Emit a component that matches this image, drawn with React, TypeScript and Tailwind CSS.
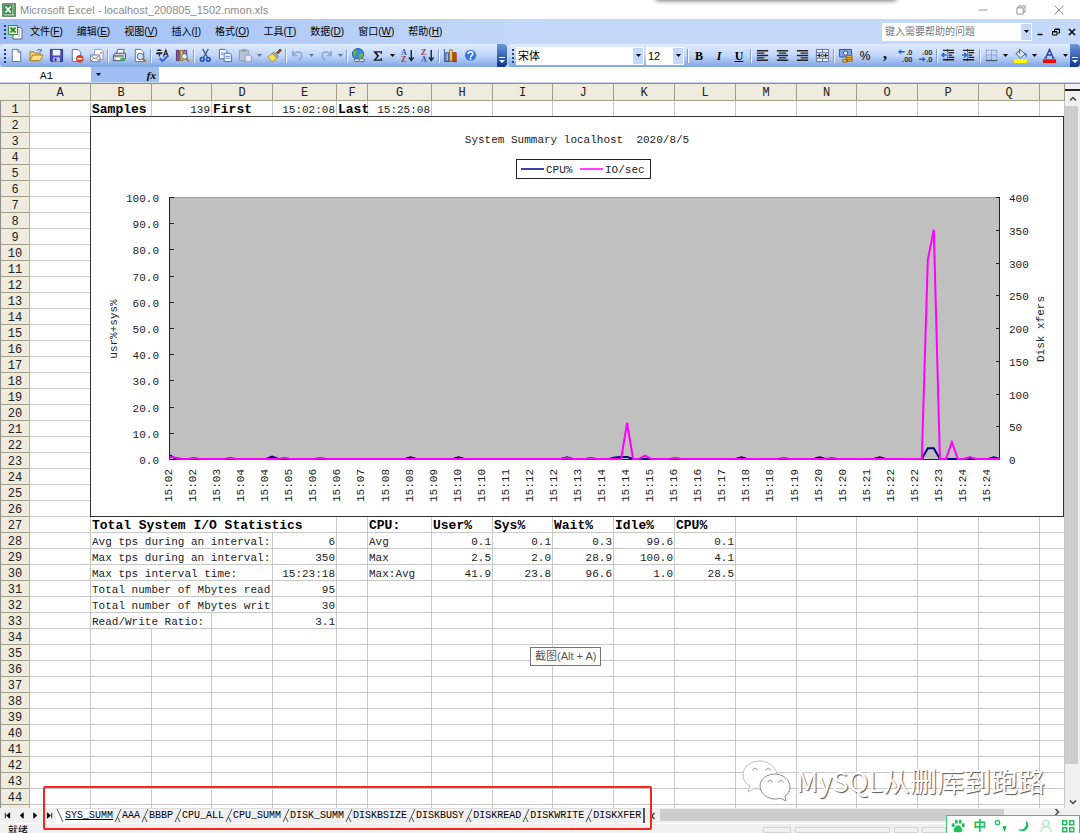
import type { ReactNode } from 'react';

interface Cell {
  col: number;
  text: string;
  span?: number;
  bold?: boolean;
  right?: boolean;
}

const COLUMNS = 'ABCDEFGHIJKLMNOPQ'.split('');
const COLUMN_WIDTHS = [30, 61, 61, 60, 61, 64, 31, 64, 61, 60, 61, 61, 61, 61, 60, 61, 61, 61];
const ROW_COUNT = 44;

const CELLS: Record<number, Cell[]> = {
  1: [
    { col: 1, text: 'Samples', bold: true },
    { col: 2, text: '139', right: true },
    { col: 3, text: 'First', bold: true },
    { col: 4, text: '15:02:08', right: true },
    { col: 5, text: 'Last', bold: true },
    { col: 6, text: '15:25:08', right: true },
  ],
  27: [
    { col: 1, text: 'Total System I/O Statistics', bold: true, span: 4 },
    { col: 6, text: 'CPU:', bold: true },
    { col: 7, text: 'User%', bold: true },
    { col: 8, text: 'Sys%', bold: true },
    { col: 9, text: 'Wait%', bold: true },
    { col: 10, text: 'Idle%', bold: true },
    { col: 11, text: 'CPU%', bold: true },
  ],
  28: [
    { col: 1, text: 'Avg tps during an interval:', span: 3 },
    { col: 4, text: '6', right: true },
    { col: 6, text: 'Avg' },
    { col: 7, text: '0.1', right: true },
    { col: 8, text: '0.1', right: true },
    { col: 9, text: '0.3', right: true },
    { col: 10, text: '99.6', right: true },
    { col: 11, text: '0.1', right: true },
  ],
  29: [
    { col: 1, text: 'Max tps during an interval:', span: 3 },
    { col: 4, text: '350', right: true },
    { col: 6, text: 'Max' },
    { col: 7, text: '2.5', right: true },
    { col: 8, text: '2.0', right: true },
    { col: 9, text: '28.9', right: true },
    { col: 10, text: '100.0', right: true },
    { col: 11, text: '4.1', right: true },
  ],
  30: [
    { col: 1, text: 'Max tps interval time:', span: 3 },
    { col: 4, text: '15:23:18', right: true },
    { col: 6, text: 'Max:Avg' },
    { col: 7, text: '41.9', right: true },
    { col: 8, text: '23.8', right: true },
    { col: 9, text: '96.6', right: true },
    { col: 10, text: '1.0', right: true },
    { col: 11, text: '28.5', right: true },
  ],
  31: [
    { col: 1, text: 'Total number of Mbytes read', span: 3 },
    { col: 4, text: '95', right: true },
  ],
  32: [
    { col: 1, text: 'Total number of Mbytes writ', span: 3 },
    { col: 4, text: '30', right: true },
  ],
  33: [
    { col: 1, text: 'Read/Write Ratio:', span: 2 },
    { col: 4, text: '3.1', right: true },
  ],
};

const MENUS = [
  ['文件', 'F'],
  ['编辑', 'E'],
  ['视图', 'V'],
  ['插入', 'I'],
  ['格式', 'O'],
  ['工具', 'T'],
  ['数据', 'D'],
  ['窗口', 'W'],
  ['帮助', 'H'],
];

const SHEETS = [
  'SYS_SUMM', 'AAA', 'BBBP', 'CPU_ALL', 'CPU_SUMM', 'DISK_SUMM',
  'DISKBSIZE', 'DISKBUSY', 'DISKREAD', 'DISKWRITE', 'DISKXFER',
];

function Svg({ children, size = 15 }: { children: ReactNode; size?: number }) {
  return (
    <svg width={size} height={size} viewBox="0 0 16 16" fill="none" aria-hidden="true">
      {children}
    </svg>
  );
}

const page = <path d="M3.5 1.5h6l3 3v10h-9z" fill="#fff" stroke="#5b6f9e" />;

const ICONS: Record<string, ReactNode> = {
  new: <Svg>{page}<path d="M9.5 1.5v3h3" stroke="#5b6f9e" /></Svg>,
  open: (
    <Svg>
      <path d="M1 13V4h4l1 1.5h6V8" fill="#f6d06a" stroke="#a8741b" />
      <path d="M1 13.5 4 7.5h11l-3 6z" fill="#ffe28a" stroke="#a8741b" />
      <path d="M8 3c2-2 4-2 5 0m0-2v2.500h-2" stroke="#3a5fa8" />
    </Svg>
  ),
  save: (
    <Svg>
      <path d="M1.500 1.500h13v13h-12l-1-1z" fill="#4a4fb5" stroke="#2d2f86" />
      <path d="M4 2h8v6H4z" fill="#eef2ff" />
      <path d="M4.500 10h7v4.500h-7z" fill="#c4c8e8" />
      <path d="M6 11h2v3H6z" fill="#2d2f86" />
    </Svg>
  ),
  permission: (
    <Svg>
      {page}
      <circle cx="11.500" cy="11.500" r="4" fill="#e2391d" />
      <path d="M9 11.500h5" stroke="#fff" strokeWidth="1.700" />
    </Svg>
  ),
  mail: (
    <Svg>
      <path d="M6 1.500h7l2 2V12H6z" fill="#fff" stroke="#8b93ab" />
      <path d="M1.500 7.500h10v7h-10z" fill="#f4f4f4" stroke="#777f98" />
      <path d="m2 8 4.500 3.500L11 8M2 14l3-3m6 3-3-3" stroke="#777f98" />
      <path d="M12 4h2v2h-2z" fill="#d97a50" />
    </Svg>
  ),
  print: (
    <Svg>
      <path d="m5 6 1-4.500h7L12 6" fill="#fff" stroke="#5d6475" />
      <path d="M1.500 7.500 4 5.500h10.500V11L12 13.500H1.500z" fill="#c9cdd6" stroke="#4c5160" />
      <path d="M2 8.500h10.500" stroke="#4c5160" />
      <path d="M4 11.500h6" stroke="#fff" strokeWidth="2" />
      <path d="M9 12h5" stroke="#39b04b" strokeWidth="3" />
    </Svg>
  ),
  preview: (
    <Svg>
      {page}
      <circle cx="9" cy="9" r="3.500" fill="#c9e4f8" stroke="#4f5b72" />
      <path d="m11.500 11.500 3 3" stroke="#b9741d" strokeWidth="2.400" />
    </Svg>
  ),
  spelling: (
    <Svg>
      <path d="M2 2.500h5M4.500 1v1.500M2 5h5L4.500 7v2M1 6h6.500M9 9l2.500-7L14 9M10 6.500h3" stroke="#222" strokeWidth="1.200" />
      <path d="m5 11 3 3 6-6" stroke="#2e66cf" strokeWidth="2.200" />
    </Svg>
  ),
  research: (
    <Svg>
      <path d="M1.500 2.500h3v11h-3z" fill="#8650a8" stroke="#583277" />
      <path d="M5.500 2.500h3v11h-3z" fill="#f2c94c" stroke="#8a6b16" />
      <path d="M9.500 2.500h3v9h-3z" fill="#b08bd0" stroke="#583277" />
      <circle cx="10" cy="9" r="3" fill="#dff0ff" stroke="#475" />
      <path d="m12 11 3 3.500" stroke="#c07a20" strokeWidth="2" />
    </Svg>
  ),
  cut: (
    <Svg>
      <path d="m5 1 5 9M11 1l-5 9" stroke="#45608f" strokeWidth="1.500" />
      <circle cx="4.500" cy="12" r="2" stroke="#1d4fb0" strokeWidth="1.600" />
      <circle cx="11" cy="12" r="2" stroke="#1d4fb0" strokeWidth="1.600" />
    </Svg>
  ),
  copy: (
    <Svg>
      <path d="M1.500 1.500h6l2 2v8h-8z" fill="#fff" stroke="#4567b0" />
      <path d="M6.500 5.500h6l2 2v7h-8z" fill="#eaf1ff" stroke="#4567b0" />
      <path d="M8 9h5M8 11h5M3 5h3M3 7h3" stroke="#6f8fd0" />
    </Svg>
  ),
  paste: (
    <Svg>
      <path d="M1.500 2.500h10v11h-10z" fill="#b9c3d6" stroke="#8f9ab3" />
      <path d="M4 1h5v3H4z" fill="#9aa5bb" />
      <path d="M7.500 7.500h5l2 2v5h-7z" fill="#e6ebf5" stroke="#8f9ab3" />
    </Svg>
  ),
  brush: (
    <Svg>
      <path d="m10 5 4-4 1.500 1.500-4 4z" fill="#8a5a22" stroke="#5f3d13" />
      <path d="M7 4.500 12 9l-1.500 1.500L5.500 6z" fill="#a9b4c8" stroke="#5f6a80" />
      <path d="m5.500 6 5 4.500L6 15 1 9.500z" fill="#ffe14f" stroke="#b0902a" />
    </Svg>
  ),
  undo: <Svg><path d="M3 3v5h5M3.500 8c2-5 9-5 9 0 0 2-1 4-3 5" stroke="#8fa6d6" strokeWidth="1.800" /></Svg>,
  redo: <Svg><path d="M13 3v5H8M12.500 8c-2-5-9-5-9 0 0 2 1 4 3 5" stroke="#8fa6d6" strokeWidth="1.800" /></Svg>,
  link: (
    <Svg>
      <circle cx="7.500" cy="6.500" r="6" fill="#3d87d8" stroke="#265a9c" />
      <path d="M3 3c3-2 4 1 3 3s-3 2-4 1zm5 5c2-3 4-3 5-2 0 3-2 5-4 6z" fill="#5fbb46" />
      <rect x="3.500" y="11.500" width="6" height="3" rx="1.500" fill="#dbe1ec" stroke="#566078" />
      <rect x="8.500" y="11.500" width="6" height="3" rx="1.500" fill="#dbe1ec" stroke="#566078" />
    </Svg>
  ),
  sum: <Svg size={12}><path d="M12.500 5V2.500h-9L8 8l-4.500 5.500h9V11M4.500 3l4 5" stroke="#1a1a1a" strokeWidth="1.900" /></Svg>,
  asc: <SortIcon top="A" bottom="Z" topColor="#2b51b5" bottomColor="#a33" />,
  desc: <SortIcon top="Z" bottom="A" topColor="#a33" bottomColor="#2b51b5" />,
  chart: (
    <Svg>
      <path d="M1.500 1v13.500H15" stroke="#47577c" />
      <path d="M3 5h3v9H3z" fill="#9db8ef" stroke="#2c4c97" />
      <path d="M7 2h3v12H7z" fill="#ffcb3d" stroke="#a2701b" />
      <path d="M11 5h3v9h-3z" fill="#d64a23" stroke="#8c2c12" />
    </Svg>
  ),
  help: (
    <Svg>
      <circle cx="8" cy="8" r="6.500" fill="#3a76e0" stroke="#c5dbff" />
      <path d="M5.500 6.500c0-3.500 5-3 5 0C10.500 8 8 8 8 10m0 1v2" stroke="#fff" strokeWidth="1.600" />
    </Svg>
  ),
  left: <AlignIcon d="M2 3h12M2 5.500h8M2 8h12M2 10.500h8M2 13h12" />,
  center: <AlignIcon d="M2 3h12M4 5.500h8M2 8h12M4 10.500h8M2 13h12" />,
  right: <AlignIcon d="M2 3h12M6 5.500h8M2 8h12M6 10.500h8M2 13h12" />,
  merge: (
    <Svg>
      <path d="M1.500 1.500h13v13h-13zM1.500 5h13M1.500 11h13M8 1.500V5m0 6v3.500" fill="#e7eefb" stroke="#5f6f90" />
      <path d="M2 8h3.500M14 8h-3.500M4 6 5.500 8 4 10m8-4-1.500 2 1.500 2" stroke="#222" strokeWidth="1.300" />
      <circle cx="8" cy="8" r="1.200" stroke="#222" />
    </Svg>
  ),
  currency: (
    <Svg>
      <path d="M1.500 1.500h13v8h-13z" fill="#7ea3e6" stroke="#2e4d99" />
      <circle cx="8" cy="5.500" r="2.300" fill="#dfeaff" stroke="#2e4d99" />
      <path d="M9 8h6v6H9zm-4 4h5v3H5z" fill="#f2b632" stroke="#94661a" />
      <path d="M9 10h6m-6 2h6" stroke="#94661a" />
    </Svg>
  ),
  incDecimal: <DecimalIcon top=".0" bottom=".00" up />,
  decDecimal: <DecimalIcon top=".00" bottom=".0" />,
  outdent: (
    <Svg>
      <path d="M2 2.500h12M8 5h6M8 7.500h4M8 10h6M2 12.500h12" stroke="#222" strokeWidth="1.400" />
      <path d="M7 1v14" stroke="#222" strokeDasharray="1 1" />
      <path d="M6 7.500H1M3.500 5 1 7.500 3.500 10" stroke="#2b5fd0" strokeWidth="1.500" />
    </Svg>
  ),
  indent: (
    <Svg>
      <path d="M2 2.500h12M8 5h6M8 7.500h4M8 10h6M2 12.500h12" stroke="#222" strokeWidth="1.400" />
      <path d="M7 1v14" stroke="#222" strokeDasharray="1 1" />
      <path d="M1 7.500h5M3.500 5 6 7.500 3.500 10" stroke="#2b5fd0" strokeWidth="1.500" />
    </Svg>
  ),
  borders: (
    <Svg>
      <path d="M2.500 2v11M8 2v11m5.500-11v11M2 2.500h12M2 7.500h12" stroke="#66779b" strokeDasharray="1 1" />
      <path d="M2 13.500h12" stroke="#333" />
    </Svg>
  ),
  fill: (
    <Svg>
      <path d="m3 6 5-4 5 4.500L8 10.500z" fill="#dbe9fb" stroke="#40567f" />
      <path d="M7 1v5" stroke="#40567f" />
      <path d="M12 5c3 0 3 3 2.500 5-1-1-2-3-2.500-5z" fill="#3d76d4" />
      <path d="M1 12h14v4H1z" fill="#ffff00" />
    </Svg>
  ),
  fontColor: (
    <Svg>
      <path d="m4 10.500 4-9 4 9M5.500 7.500h5M2.500 10.500h3m5 0h3" stroke="#2b4a94" strokeWidth="1.500" />
      <path d="M1 12h14v4H1z" fill="#ff0000" />
    </Svg>
  ),
};

function SortIcon({ top, bottom, topColor, bottomColor }: { top: string; bottom: string; topColor: string; bottomColor: string }) {
  return (
    <Svg>
      <text x="1" y="7.500" fontSize="8.500" fontWeight="bold" fontFamily="Liberation Serif" fill={topColor}>{top}</text>
      <text x="1" y="15" fontSize="8.500" fontWeight="bold" fontFamily="Liberation Serif" fill={bottomColor}>{bottom}</text>
      <path d="M12 2v11m-2.500-3 2.500 3.500 2.500-3.500" stroke="#222" strokeWidth="1.500" />
    </Svg>
  );
}

function AlignIcon({ d }: { d: string }) {
  return <Svg><path d={d} stroke="#222" strokeWidth="1.500" /></Svg>;
}

function DecimalIcon({ top, bottom, up = false }: { top: string; bottom: string; up?: boolean }) {
  return (
    <Svg>
      <text x="15.500" y="7" textAnchor="end" fontSize="8" fontWeight="bold" fontFamily="Liberation Sans" fill="#333">{top}</text>
      <text x="15.500" y="15" textAnchor="end" fontSize="8" fontWeight="bold" fontFamily="Liberation Sans" fill="#333">{bottom}</text>
      <path d={up ? 'M7 4H1m2-2L1 4l2 2' : 'M1 12h6m-2-2 2 2-2 2'} stroke="#2b5fd0" strokeWidth="1.400" />
    </Svg>
  );
}

function Tool({ name, label, children }: { name?: string; label: string; children?: ReactNode }) {
  return (
    <button aria-label={label} className="flex h-5 w-5 shrink-0 items-center justify-center text-black">
      {name ? ICONS[name] : children}
    </button>
  );
}

function Caret() {
  return (
    <svg width="5" height="3" viewBox="0 0 5 3" aria-hidden="true">
      <path d="M0 0h5L2.500 3z" fill="currentColor" />
    </svg>
  );
}

function CaretButton({ label, muted = false }: { label: string; muted?: boolean }) {
  return (
    <button
      aria-label={label}
      className={`flex h-5 w-[9px] shrink-0 items-center justify-center ${muted ? 'text-slate-500' : 'text-black'}`}
    >
      <Caret />
    </button>
  );
}

function Separator() {
  return (
    <span className="flex w-[3px] shrink-0 justify-center">
      <span className="h-[14px] w-[2px] border-r border-l border-r-[#f1f6ff] border-l-[#7d9cd4]" />
    </span>
  );
}

function Grip() {
  return <span className="ml-1 h-[14px] shrink-0 border-l-2 border-dotted border-[#27417d]" />;
}

function ToolbarEnd() {
  return (
    <button
      aria-label="工具栏选项"
      className="flex h-full w-[10px] shrink-0 items-end justify-center rounded-r bg-gradient-to-b from-[#7096dc] to-[#0b3692] pb-1 text-white"
    >
      <svg width="6" height="6" viewBox="0 0 6 6" aria-hidden="true">
        <path d="M0 0h6v1H0zM0 3h6L3 6z" fill="currentColor" />
      </svg>
    </button>
  );
}

function Combo({ label, value, className }: { label: string; value: string; className: string }) {
  return (
    <label className={`flex h-[18px] shrink-0 items-center bg-white ${className}`}>
      <select aria-label={label} className="min-w-0 flex-1 appearance-none px-[2px] text-[11px] leading-4 text-black outline-none">
        <option>{value}</option>
      </select>
      <span className="mr-px flex h-4 w-[10px] items-center justify-center bg-[#c3d8fa]">
        <Caret />
      </span>
    </label>
  );
}

function ExcelIcon() {
  return (
    <Svg size={14}>
      <path d="M1 1h14v14H1z" fill="#dcebd9" stroke="#35703b" strokeWidth="1.500" />
      <path d="M2 2h10v11H2z" fill="#2f8b45" />
      <path d="m4 4 6 7M10 4l-6 7" stroke="#fff" strokeWidth="2" />
      <path d="M13.500 3v10" stroke="#35703b" />
    </Svg>
  );
}

function WorkbookIcon() {
  return (
    <Svg size={16}>
      <path d="M6 3.500h7.500l1.500 1.500v10H6z" fill="#fff" stroke="#5a6580" />
      <path d="M12 5v8" stroke="#9aa5bf" />
      <path d="M1.500 1.500h9v9h-9z" fill="#e4f3df" stroke="#3f8a3f" />
      <path d="m3.500 3.500 5 5m0-5-5 5" stroke="#2f8b3a" strokeWidth="1.800" />
    </Svg>
  );
}

function TitleBar() {
  return (
    <header className="flex h-[19px] shrink-0 items-center bg-white px-[2px]">
      <ExcelIcon />
      <h1 className="ml-1 text-[11px] leading-4 text-[#8a8a8a]">
        Microsoft Excel - localhost_200805_1502.nmon.xls
      </h1>
      <div className="ml-auto flex items-center text-[#8c8c8c]">
        <button aria-label="最小化" className="flex w-[38px] justify-center">
          <Svg size={10}><path d="M1 8h14" stroke="currentColor" strokeWidth="1.500" /></Svg>
        </button>
        <button aria-label="还原" className="flex w-[38px] justify-center">
          <Svg size={10}><path d="M1.500 4.500h10v10h-10zM4.500 4V1.500h10v10H12" stroke="currentColor" strokeWidth="1.500" /></Svg>
        </button>
        <button aria-label="关闭" className="flex w-[38px] justify-center">
          <Svg size={10}><path d="m1 1 14 14M15 1 1 15" stroke="currentColor" strokeWidth="1.500" /></Svg>
        </button>
      </div>
    </header>
  );
}

function MenuBar() {
  return (
    <nav className="flex h-[25px] shrink-0 items-center bg-gradient-to-r from-[#9ebef5] to-[#c4d9fa] to-50% text-[10px] text-black">
      <Grip />
      <div className="ml-px"><WorkbookIcon /></div>
      <div className="ml-[7px] flex gap-[14px]">
        {MENUS.map(([name, key]) => (
          <button key={name} className="leading-4">
            {name}(<u>{key}</u>)
          </button>
        ))}
      </div>
      <div className="ml-auto flex h-[18px] w-[150px] items-center bg-white">
        <input
          aria-label="帮助问题"
          placeholder="键入需要帮助的问题"
          className="min-w-0 flex-1 px-[3px] text-[10px] leading-4 outline-none placeholder:text-[#777]"
        />
        <button aria-label="最近的问题" className="mr-px flex h-4 w-[10px] items-center justify-center bg-[#c3d8fa]">
          <Caret />
        </button>
      </div>
      <div className="flex w-[48px] items-center justify-around">
        <button aria-label="最小化工作簿"><Svg size={8}><path d="M3 13h10" stroke="#000" strokeWidth="3" /></Svg></button>
        <button aria-label="还原工作簿">
          <Svg size={8}><path d="M1 7h9v7H1zM5 6V2h10v8h-4M5 3h10M1 8h9" stroke="#000" strokeWidth="2" /></Svg>
        </button>
        <button aria-label="关闭工作簿"><Svg size={8}><path d="m2 2 12 12M14 2 2 14" stroke="#000" strokeWidth="3" /></Svg></button>
      </div>
    </nav>
  );
}

function Toolbars() {
  return (
    <div className="flex h-[23px] shrink-0 bg-[#c4d9fa]">
      <div className="flex w-[507px] shrink-0 items-center rounded bg-gradient-to-b from-[#e1ecfe] via-[#c0d6fa] to-[#7fa5e4]">
        <Grip />
        <Tool name="new" label="新建" />
        <Tool name="open" label="打开" />
        <Tool name="save" label="保存" />
        <Tool name="permission" label="权限" />
        <Tool name="mail" label="电子邮件" />
        <Separator />
        <Tool name="print" label="打印" />
        <Tool name="preview" label="打印预览" />
        <Separator />
        <Tool name="spelling" label="拼写检查" />
        <Tool name="research" label="信息检索" />
        <Separator />
        <Tool name="cut" label="剪切" />
        <Tool name="copy" label="复制" />
        <Tool name="paste" label="粘贴" />
        <CaretButton label="粘贴选项" muted />
        <Tool name="brush" label="格式刷" />
        <Separator />
        <Tool name="undo" label="撤销" />
        <CaretButton label="撤销列表" muted />
        <Tool name="redo" label="恢复" />
        <CaretButton label="恢复列表" muted />
        <Separator />
        <Tool name="link" label="超链接" />
        <Tool name="sum" label="自动求和" />
        <CaretButton label="求和选项" />
        <Tool name="asc" label="升序" />
        <Tool name="desc" label="降序" />
        <Separator />
        <Tool name="chart" label="图表向导" />
        <Tool name="help" label="帮助" />
        <div className="ml-auto h-full"><ToolbarEnd /></div>
      </div>
      <div className="ml-px flex min-w-0 flex-1 items-center rounded bg-gradient-to-b from-[#e1ecfe] via-[#c0d6fa] to-[#7fa5e4]">
        <Grip />
        <Combo label="字体" value="宋体" className="ml-[2px] w-[128px]" />
        <Combo label="字号" value="12" className="mr-[2px] ml-[2px] w-[38px]" />
        <Separator />
        <Tool label="加粗"><b className="font-['Liberation_Serif',serif] text-xs">B</b></Tool>
        <Tool label="倾斜"><i className="font-['Liberation_Serif',serif] text-xs font-bold">I</i></Tool>
        <Tool label="下划线"><u className="font-['Liberation_Serif',serif] text-xs font-bold">U</u></Tool>
        <Separator />
        <Tool name="left" label="左对齐" />
        <Tool name="center" label="居中" />
        <Tool name="right" label="右对齐" />
        <Tool name="merge" label="合并及居中" />
        <Separator />
        <Tool name="currency" label="货币样式" />
        <Tool label="百分比样式"><span className="text-xs">%</span></Tool>
        <Tool label="千位分隔样式"><b className="pb-1 font-['Liberation_Serif',serif] text-base leading-3">,</b></Tool>
        <Tool name="incDecimal" label="增加小数位数" />
        <Tool name="decDecimal" label="减少小数位数" />
        <Separator />
        <Tool name="outdent" label="减少缩进量" />
        <Tool name="indent" label="增加缩进量" />
        <Separator />
        <Tool name="borders" label="边框" />
        <CaretButton label="边框选项" />
        <Tool name="fill" label="填充颜色" />
        <CaretButton label="填充颜色选项" />
        <Tool name="fontColor" label="字体颜色" />
        <div className="ml-auto flex h-full items-center">
          <CaretButton label="字体颜色选项" />
          <ToolbarEnd />
        </div>
      </div>
    </div>
  );
}

function FormulaBar() {
  return (
    <div className="flex h-4 shrink-0 border-b border-[#c9d6ec] bg-white pl-[2px]">
      <input
        aria-label="名称框"
        defaultValue="A1"
        className="w-[89px] pt-[2px] text-center font-['Liberation_Mono',monospace] text-[11px] leading-3 outline-none"
      />
      <div className="flex w-[68px] items-center justify-between bg-[#9ebef5] px-[3px]">
        <button aria-label="名称列表" className="px-[2px]"><Caret /></button>
        <button aria-label="插入函数" className="font-['Liberation_Serif',serif] text-[11px] leading-3 font-bold italic">
          fx
        </button>
      </div>
      <input aria-label="编辑栏" className="min-w-0 flex-1 px-1 text-[11px] outline-none" />
    </div>
  );
}

function RowHeader({ children }: { children?: ReactNode }) {
  return (
    <th
      scope="row"
      className="h-4 border-r border-b border-l border-r-[#b4b196] border-b-[#a19e83] border-l-[#8c8c8c] bg-[#efebde] pt-[3px] text-xs leading-[12px] font-normal text-[#222]"
    >
      {children}
    </th>
  );
}

function SheetRow({ row }: { row: number }) {
  const cells: ReactNode[] = [];
  let col = 0;
  while (col <= COLUMNS.length) {
    const current = col;
    const cell = (CELLS[row] ?? []).find((c) => c.col === current);
    cells.push(
      <td
        key={col}
        colSpan={cell?.span ?? 1}
        className={`h-4 border-r border-b border-[#c8c8c8] pt-[3px] leading-[12px] whitespace-nowrap ${
          cell?.right ? 'pr-px text-right' : 'pl-px text-left'
        } ${cell?.bold ? 'text-[13px] font-bold text-black' : 'text-[11px] text-[#222]'}`}
      >
        {cell?.text}
      </td>,
    );
    col += cell?.span ?? 1;
  }
  return (
    <tr>
      <RowHeader>{row}</RowHeader>
      {cells}
    </tr>
  );
}

// Plot area inside the chart object
const PLOT = { x: 79, y: 81, width: 830, height: 262 };
const SAMPLES = 139;

const IO_VALUES: Record<number, number> = {
  0: 3, 1: 2, 4: 2, 10: 2, 19: 2, 25: 2, 66: 2, 70: 2, 76: 55, 79: 5, 84: 2, 102: 2, 110: 2,
  126: 304, 127: 350, 130: 26, 133: 3,
};
const CPU_VALUES: Record<number, number> = {
  0: 1.4, 17: 0.9, 40: 0.6, 48: 0.6, 66: 0.6, 74: 0.6, 75: 0.8, 76: 0.8, 95: 0.6, 108: 0.6,
  118: 0.6, 126: 4.1, 127: 4.1, 137: 0.6,
};

function linePoints(values: Record<number, number>, max: number) {
  return Array.from({ length: SAMPLES }, (_, i) => {
    const x = PLOT.x + (i * PLOT.width) / (SAMPLES - 1);
    const y = PLOT.y + PLOT.height - 1 - ((values[i] ?? 0) / max) * PLOT.height;
    return `${x.toFixed(1)},${y.toFixed(1)}`;
  }).join(' ');
}

function SummaryChart() {
  const bottom = PLOT.y + PLOT.height;
  const right = PLOT.x + PLOT.width;
  const times = Array.from({ length: 35 }, (_, k) => `15:${String(Math.floor((128 + 40 * k) / 60)).padStart(2, '0')}`);

  return (
    <svg
      viewBox="0 0 972 399"
      className="block w-full font-['Liberation_Mono',monospace] text-[11px]"
      fill="#222"
      role="img"
      aria-label="System Summary localhost"
    >
      <text x="486" y="26" textAnchor="middle">{'System Summary localhost\u00a0 2020/8/5'}</text>
      <g>
        <rect x="425.500" y="42.500" width="134" height="19" fill="#fff" stroke="#222" />
        <path d="M430 52h23" stroke="#000080" strokeWidth="1.500" />
        <text x="455" y="56">CPU%</text>
        <path d="M489 52h23" stroke="#ff00ff" strokeWidth="1.500" />
        <text x="514" y="56">IO/sec</text>
      </g>

      <rect x={PLOT.x} y={PLOT.y} width={PLOT.width} height={PLOT.height} fill="#c0c0c0" />
      <path d={`M${PLOT.x} ${PLOT.y - 0.5}H${right}`} stroke="#999" />
      <path d={`M${PLOT.x - 0.5} ${PLOT.y - 1}V${bottom - 0.5}H${right - 0.5}V${PLOT.y - 1}`} fill="none" stroke="#222" />

      {Array.from({ length: 11 }, (_, i) => {
        const y = Math.round(bottom - (i * PLOT.height) / 10);
        return (
          <g key={i}>
            <path d={`M${PLOT.x} ${y - 0.5}h4`} stroke="#222" />
            <text x="68" y={y + 4} textAnchor="end">{(i * 10).toFixed(1)}</text>
          </g>
        );
      })}
      {Array.from({ length: 9 }, (_, i) => {
        const y = Math.round(bottom - (i * PLOT.height) / 8);
        return (
          <g key={i}>
            <path d={`M${right} ${y - 0.5}h-4`} stroke="#222" />
            <text x="918" y={y + 4}>{i * 50}</text>
          </g>
        );
      })}

      <polyline points={linePoints(CPU_VALUES, 100)} fill="none" stroke="#000080" strokeWidth="2" />
      <polyline points={linePoints(IO_VALUES, 400)} fill="none" stroke="#ff00ff" strokeWidth="2" />

      {times.map((time, k) => {
        const x = Math.round(PLOT.x + (k * 4 * PLOT.width) / (SAMPLES - 1)) + 2;
        return <text key={k} transform={`translate(${x} 385) rotate(-90)`}>{time}</text>;
      })}
      <text transform="translate(26 212) rotate(-90)" textAnchor="middle">usr%+sys%</text>
      <text transform="translate(953 212) rotate(-90)" textAnchor="middle">Disk xfers</text>
    </svg>
  );
}

function Sheet() {
  return (
    <div className="relative min-w-0 flex-1 overflow-hidden">
      <table className="w-full table-fixed border-separate border-spacing-0 font-['Liberation_Mono',monospace]">
        <colgroup>
          {COLUMN_WIDTHS.map((width, i) => (
            <col key={i} style={{ width }} />
          ))}
          <col />
        </colgroup>
        <thead>
          <tr>
            {['', ...COLUMNS, ''].map((name, i) => (
              <th
                key={i}
                scope="col"
                className="h-[17px] border-r border-b border-[#a19e83] bg-[#efebde] pt-[3px] text-xs leading-[13px] font-normal text-[#222]"
              >
                {name}
              </th>
            ))}
          </tr>
        </thead>
        <tbody>
          {Array.from({ length: ROW_COUNT }, (_, i) => (
            <SheetRow key={i} row={i + 1} />
          ))}
          <tr>
            <RowHeader />
            {['', ...COLUMNS].map((name) => (
              <td key={name} className="border-r border-[#c8c8c8]" />
            ))}
          </tr>
        </tbody>
      </table>

      <div className="absolute top-[32px] right-px left-[90px] border border-[#333] bg-white">
        <SummaryChart />
      </div>

      <div className="absolute top-[563px] left-[530px] border border-[#767676] bg-white px-1 text-[11px] leading-[17px] text-[#575757]">
        截图(Alt + A)
      </div>

      <Watermark />
    </div>
  );
}

function Watermark() {
  return (
    <div className="absolute right-[20px] bottom-[5px] flex items-center gap-1">
      <svg width="50" height="44" viewBox="0 0 50 44" fill="#fff" stroke="#8a8a8a" aria-hidden="true">
        <path d="M18 2C8 2 1 8 1 16c0 5 3 9 7 11l-2 6 7-4c2 1 4 1 7 1 9-1 15-7 15-14S27 2 18 2z" stroke="#bbb" />
        <path d="M11 11.500c0-3 4-3 4 0m9 0c0-3 4-3 4 0" fill="none" />
        <path d="M33 15c-8 0-15 5-15 12s7 13 15 13c2 0 4 0 5-1l6 3-1-5c3-2 5-5 5-9 0-7-7-13-15-13z" />
        <path d="M26 23.500c0-3 4-3 4 0m7 0c0-3 4-3 4 0" fill="none" />
      </svg>
      <span className="font-['Noto_Sans_CJK_SC',sans-serif] text-[27px] leading-10 text-white [text-shadow:1px_1px_1px_#555]">
        MySQL从删库到跑路
      </span>
    </div>
  );
}

function VerticalScrollbar() {
  return (
    <div className="flex w-[15px] shrink-0 flex-col bg-[#f0f0f0] text-[#444]">
      <span className="mt-[5px] h-[2px] bg-[#222]" />
      <button aria-label="向上滚动" className="flex h-[15px] items-center justify-center">
        <Svg size={8}><path d="m2 11 6-6 6 6" stroke="currentColor" strokeWidth="3" /></Svg>
      </button>
      <span className="mr-[2px] flex-[658] bg-[#cdcdcd]" />
      <span className="flex-[32]" />
      <button aria-label="向下滚动" className="flex h-[12px] items-center justify-center">
        <Svg size={8}><path d="m2 5 6 6 6-6" stroke="currentColor" strokeWidth="3" /></Svg>
      </button>
    </div>
  );
}

function SheetTabs() {
  const arrows: [string, string][] = [
    ['第一张工作表', 'M3 2v12M13 2 6 8l7 6z'],
    ['上一张工作表', 'M12 2 5 8l7 6z'],
    ['下一张工作表', 'M4 2l7 6-7 6z'],
    ['最后一张工作表', 'M13 2v12M3 2l7 6-7 6z'],
  ];
  return (
    <div className="relative flex h-[15px] shrink-0 bg-[#f0f0f0]">
      <div className="flex shrink-0">
        {arrows.map(([label, d]) => (
          <button key={label} aria-label={label} className="flex w-[14px] items-center justify-center">
            <Svg size={7}><path d={d} fill="#000" stroke="#000" strokeWidth="2" /></Svg>
          </button>
        ))}
      </div>
      <div className="flex w-[587px] shrink-0 overflow-hidden border-t border-[#ddd] font-['Liberation_Mono',monospace] text-[10px] leading-[14px]">
        {SHEETS.map((name, i) => (
          <button key={name} className={`flex shrink-0 text-black ${i === 0 ? 'bg-white' : ''}`}>
            <svg width="9" height="14" viewBox="0 0 9 14" fill="none" stroke="#555" aria-hidden="true">
              {i === 0 ? <path d="m1 0 6 13" /> : <path d="M8 0 2 13M4.500 8 7 13" />}
            </svg>
            <span className={i === 0 ? 'underline' : ''}>{name}</span>
          </button>
        ))}
      </div>
      <div className="flex min-w-0 flex-1 border-l-2 border-[#555] text-[#444]">
        <button aria-label="向左滚动" className="flex w-[15px] items-center justify-center">
          <Svg size={8}><path d="M11 2 5 8l6 6" stroke="currentColor" strokeWidth="3" /></Svg>
        </button>
        <span className="mt-px mb-[2px] flex-[340] bg-[#cdcdcd]" />
        <span className="flex-[44]" />
        <button aria-label="向右滚动" className="mr-4 flex w-[15px] justify-center">
          <Svg size={8}><path d="m5 2 6 6-6 6" stroke="currentColor" strokeWidth="3" /></Svg>
        </button>
      </div>
      <div className="pointer-events-none absolute top-[-22px] left-[43px] h-[44px] w-[609px] rounded-[2px] border-2 border-[#fb2419]" />
    </div>
  );
}

function StatusBar() {
  return (
    <footer className="flex h-[10px] shrink-0 overflow-hidden border-t border-white bg-[#f0f0f0] text-[10px] text-black">
      <span className="ml-2 leading-[14px]">就绪</span>
      <div className="ml-auto flex gap-1 pt-[3px] pr-[134px]">
        <span className="w-7 border border-[#d4d4d4]" />
        <span className="w-[95px] border border-[#d4d4d4]" />
        <span className="w-6 border border-[#d4d4d4]" />
        <span className="w-6 border border-[#d4d4d4]" />
      </div>
    </footer>
  );
}

function InputMethodBar() {
  return (
    <div className="absolute right-0 bottom-[-4px] flex h-[22px] w-[134px] items-center justify-around border border-[#3cc870] bg-white text-[#22c05c]">
      <Svg size={14}>
        <g fill="currentColor">
          <ellipse cx="2.500" cy="7" rx="1.700" ry="2.300" />
          <ellipse cx="6" cy="3" rx="1.700" ry="2.500" />
          <ellipse cx="10.500" cy="3" rx="1.700" ry="2.500" />
          <ellipse cx="14" cy="7" rx="1.700" ry="2.300" />
          <path d="M8 7c3 0 5 4 5 6s-3 2-5 2-5 0-5-2 2-6 5-6z" />
        </g>
      </Svg>
      <button className="text-[13px] leading-4 font-bold">中</button>
      <Svg size={14}>
        <circle cx="4" cy="4" r="2.500" stroke="currentColor" strokeWidth="1.500" />
        <path d="M10 8h4c0 4-1 6-3 7 1-2 1-3-1-4z" fill="currentColor" />
      </Svg>
      <Svg size={14}><path d="M10 1c8 8-2 17-9 11 7 1 11-4 9-11z" fill="currentColor" /></Svg>
      <Svg size={14}>
        <circle cx="8" cy="5" r="3.500" stroke="#b9ecca" strokeWidth="1.800" />
        <path d="M2 15c0-8 12-8 12 0" stroke="#b9ecca" strokeWidth="1.800" />
      </Svg>
      <Svg size={14}>
        <path d="M2 2h4.500v4.500H2zM10 2h4.500v4.500H10zM2 10h4.500v4.500H2zM10 10h4.500v4.500H10z" stroke="currentColor" strokeWidth="1.800" />
      </Svg>
    </div>
  );
}

export default function App() {
  return (
    <div className="relative flex h-screen flex-col overflow-hidden bg-white font-['Liberation_Sans','Noto_Sans_CJK_SC',sans-serif]">
      <TitleBar />
      <MenuBar />
      <Toolbars />
      <FormulaBar />
      <main className="flex min-h-0 flex-1 border-t border-[#8c8c8c]">
        <Sheet />
        <VerticalScrollbar />
      </main>
      <SheetTabs />
      <StatusBar />
      <InputMethodBar />
      <div className="absolute top-[-8px] left-[656px] h-2 w-[240px] bg-white shadow-[0_1px_4px_#777]" />
    </div>
  );
}
